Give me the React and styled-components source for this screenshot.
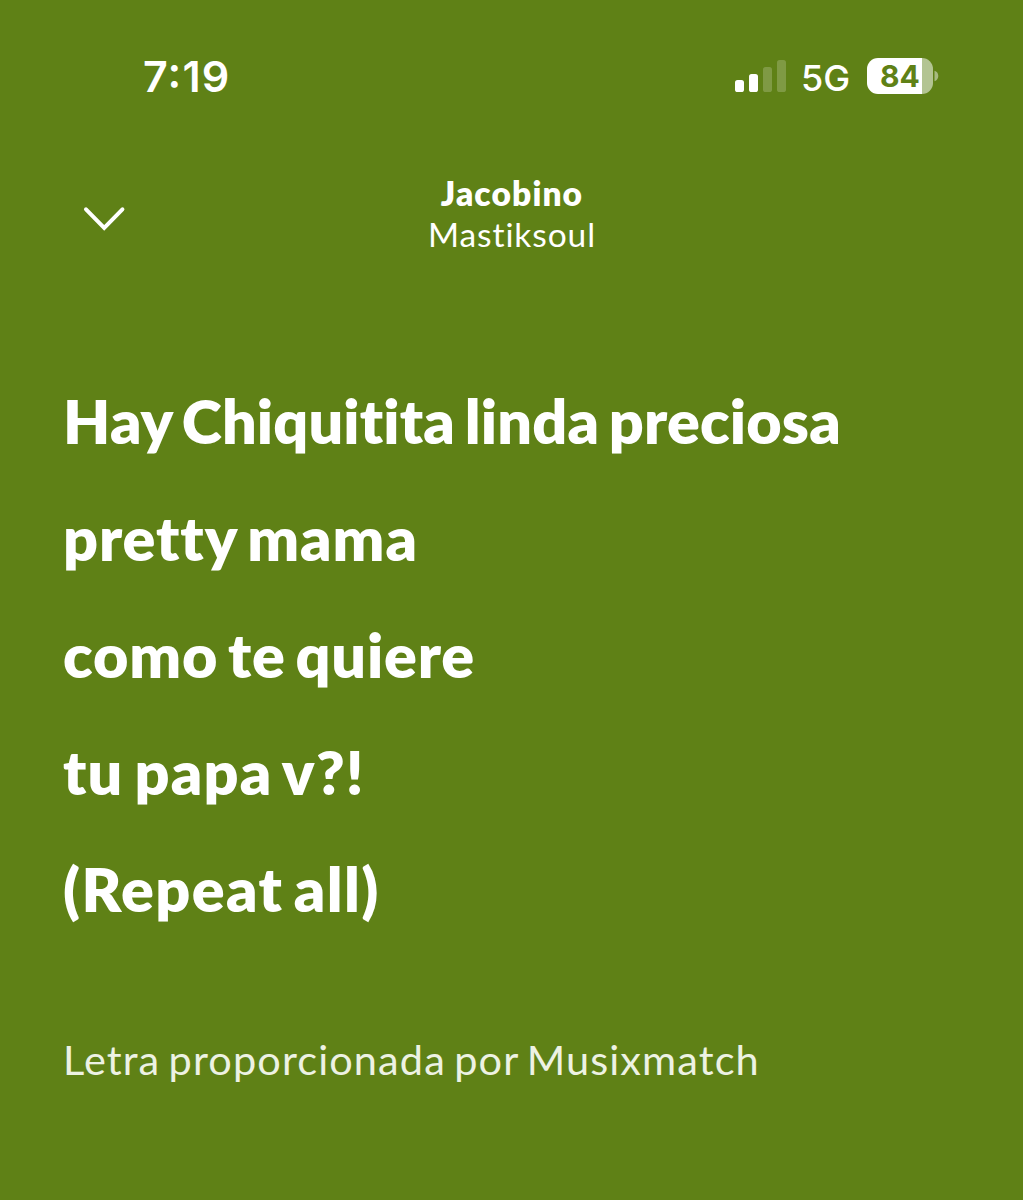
import styled, { createGlobalStyle } from "styled-components";

const lyrics = [
  { text: "Hay Chiquitita linda preciosa", spacing: 0.15, wordSpacing: -4.5 },
  { text: "pretty mama", spacing: 0.9, wordSpacing: -4.5 },
  { text: "como te quiere", spacing: 0.8, wordSpacing: -5 },
  { text: "tu papa v?!", spacing: 1.2, wordSpacing: -4.5 },
  { text: "(Repeat all)", spacing: 1.4, wordSpacing: -5 },
];

const signalBars = [
  { height: 12, active: true },
  { height: 18, active: true },
  { height: 25, active: false },
  { height: 32, active: false },
];

export default function App() {
  return (
    <>
      <GlobalStyle />
      <Screen>
        <StatusBar>
          <Time>7:19</Time>
          <StatusIcons>
            <Signal>
              {signalBars.map((bar) => (
                <SignalBar key={bar.height} $height={bar.height} $active={bar.active} />
              ))}
            </Signal>
            <Network>5G</Network>
            <Battery>
              <BatteryBody>
                <BatteryText>84</BatteryText>
              </BatteryBody>
              <BatteryTip viewBox="0 0 5 12">
                <path d="M0.5 0.8C2.8 1.4 4.3 3.4 4.3 6C4.3 8.6 2.8 10.6 0.5 11.2Z" />
              </BatteryTip>
            </Battery>
          </StatusIcons>
        </StatusBar>

        <Header>
          <CloseButton aria-label="Cerrar">
            <svg width="44" height="28" viewBox="0 0 44 28" fill="none">
              <path d="M4 4.3L22.2 22.8L40.4 4.3" stroke="#fff" strokeWidth="4" strokeLinecap="round" />
            </svg>
          </CloseButton>
          <Track>
            <Title>Jacobino</Title>
            <Artist>Mastiksoul</Artist>
          </Track>
        </Header>

        <Lyrics>
          {lyrics.map((line) => (
            <Line key={line.text} $spacing={line.spacing} $wordSpacing={line.wordSpacing}>
              {line.text}
            </Line>
          ))}
        </Lyrics>

        <Credits>Letra proporcionada por Musixmatch</Credits>
      </Screen>
    </>
  );
}

const GlobalStyle = createGlobalStyle`
  * {
    box-sizing: border-box;
  }
  body {
    margin: 0;
    background: #5f8116;
  }
`;

const Screen = styled.main`
  width: 1023px;
  height: 1200px;
  overflow: hidden;
  color: #fff;
  background: #5f8116;
  font-family: Lato, sans-serif;
  font-variant-ligatures: none;
`;

const StatusBar = styled.div`
  display: flex;
  justify-content: space-between;
  height: 171px;
  padding: 50px 84px 0 143px;
  font-family: Inter, sans-serif;
`;

const Time = styled.span`
  height: 52px;
  font-size: 43px;
  font-weight: 600;
  line-height: 52px;
  letter-spacing: 1.2px;
  font-feature-settings: "case";
`;

const StatusIcons = styled.div`
  display: flex;
  align-items: center;
  height: 52px;
`;

const Signal = styled.div`
  display: flex;
  align-items: flex-end;
  gap: 5.5px;
  width: 51px;
  height: 32px;
`;

const SignalBar = styled.span`
  width: 8.6px;
  height: ${({ $height }) => $height}px;
  border-radius: 2.6px;
  background: ${({ $active }) => ($active ? "#fff" : "rgba(255, 255, 255, 0.2)")};
`;

const Network = styled.span`
  width: 48px;
  margin: 3px 18px 0 15px;
  font-size: 36px;
  font-weight: 500;
  line-height: 44px;
`;

const Battery = styled.div`
  display: flex;
  align-items: center;
`;

const BatteryBody = styled.div`
  display: flex;
  align-items: center;
  justify-content: center;
  width: 66px;
  height: 36px;
  border-radius: 11px;
  background: linear-gradient(to right, #fff 55px, #b3c492 55px);
`;

const BatteryText = styled.span`
  color: #5f8116;
  font-size: 30px;
  font-weight: 700;
  line-height: 36px;
`;

const BatteryTip = styled.svg`
  width: 5px;
  height: 12px;
  margin-left: 1px;
  fill: #a7ba80;
`;

const Header = styled.header`
  display: grid;
  grid-template-columns: 82px 1fr 82px;
  height: 191px;
`;

const CloseButton = styled.button`
  align-self: start;
  width: 44px;
  height: 28px;
  margin: 34px 0 0 82px;
  padding: 0;
  border: 0;
  background: none;

  svg {
    display: block;
  }
`;

const Track = styled.div`
  padding-top: 1px;
  text-align: center;
  text-indent: 1px;
`;

const Title = styled.div`
  font-size: 33.5px;
  font-weight: 800;
  line-height: 42px;
  letter-spacing: 1.1px;
`;

const Artist = styled.div`
  font-size: 33.5px;
  line-height: 41px;
  letter-spacing: 0.9px;
`;

const Lyrics = styled.section`
  height: 672px;
  padding-left: 63px;
`;

const Line = styled.p`
  margin: 0;
  font-size: 61px;
  font-weight: 800;
  line-height: 117px;
  letter-spacing: ${({ $spacing }) => $spacing}px;
  word-spacing: ${({ $wordSpacing }) => $wordSpacing}px;
  white-space: nowrap;
`;

const Credits = styled.p`
  margin: 0;
  padding-left: 63px;
  color: #edf2e3;
  font-size: 41.5px;
  line-height: 50px;
  letter-spacing: 1.1px;
  word-spacing: -3.5px;
  white-space: nowrap;
`;
